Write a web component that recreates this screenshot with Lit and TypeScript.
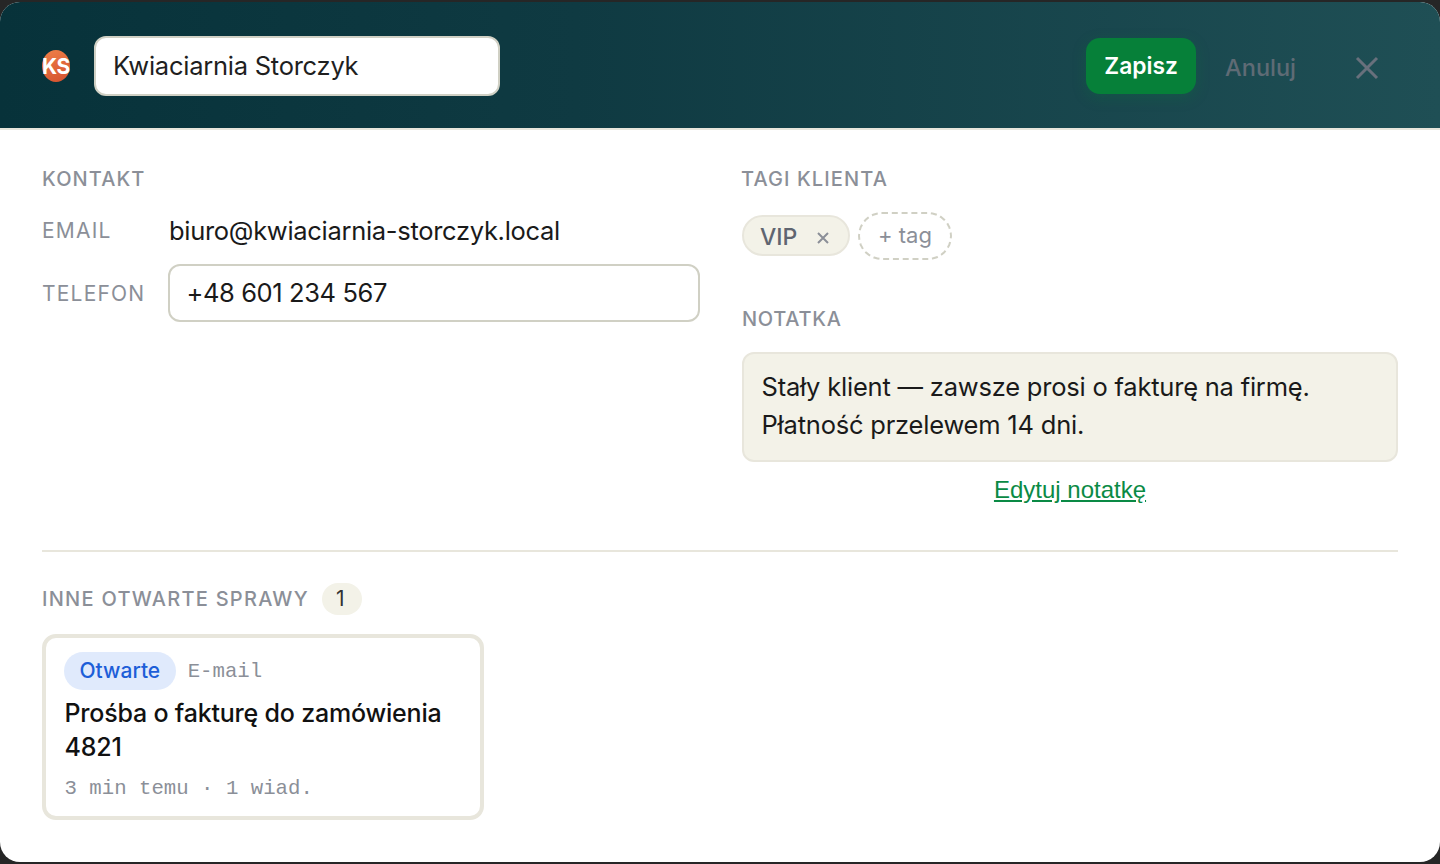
import { LitElement, html, css } from "lit";
import { customElement } from "lit/decorators.js";

@customElement("app-root")
export class AppRoot extends LitElement {
  static styles = css`
    :host { display: block; width: 1440px; height: 864px; background: #262626; font-family: Inter, "Liberation Sans", sans-serif; color: #1a1a1a; overflow: hidden; }
    .modal { height: 860px; margin-top: 2px; background: #fff; border-radius: 20px; overflow: hidden; display: flex; flex-direction: column; }
    .head { height: 128px; flex: none; box-sizing: border-box; border-bottom: 2px solid #e8e6dc; background: linear-gradient(90deg, #07323a 0%, #0f3a42 40%, #1f4f55 100%); display: flex; align-items: center; padding: 2px 42px 0; }
    .avatar { width: 28px; height: 32px; border-radius: 50%; background: linear-gradient(160deg, #ef8048, #d4502e); color: #fff; font-weight: 700; font-size: 21px; letter-spacing: -0.4px; display: flex; align-items: center; justify-content: center; flex: none; margin-right: 24px; white-space: nowrap; }
    .name { box-sizing: border-box; width: 406px; height: 60px; border: 2px solid #d0d0c4; border-radius: 12px; background: #fff; padding: 0 17px 2px; display: flex; align-items: center; font-size: 25.5px; letter-spacing: -0.25px; color: #1f1f1f; }
    .spacer { flex: 1; }
    .save { box-sizing: border-box; width: 110px; height: 56px; padding-bottom: 2px; border-radius: 14px; background: #068039; color: #fff; font-weight: 600; font-size: 22.8px; display: flex; align-items: center; justify-content: center; box-shadow: 0 4px 14px rgba(6,128,57,.25); }
    .cancel { color: #5f6b75; font-size: 23.5px; margin-left: 29px; padding-top: 2px; font-weight: 500; }
    .x { margin: 4px 19px 0 59px; display: block; }
    .body { flex: 1; padding: 35px 42px 0; display: flex; flex-direction: column; }
    .cols { display: grid; grid-template-columns: 658px 656px; column-gap: 42px; height: 385px; border-bottom: 2px solid #e8e6dc; }
    .label { font-size: 20px; font-weight: 500; letter-spacing: 1.1px; color: #8b8f98; line-height: 28px; }
    .tagi { margin-left: -1px; }
    .row { display: flex; align-items: center; }
    .row .k { width: 127px; flex: none; font-size: 21px; letter-spacing: 1.2px; color: #8b8f98; }
    .email { margin-top: 14px; height: 46px; font-size: 25.5px; letter-spacing: -0.3px; }
    .tel { margin-top: 11px; }
    .input { box-sizing: border-box; width: 532px; height: 58px; border: 2px solid #d0d0c4; border-radius: 12px; margin-left: -1px; padding: 0 17px 2px 16.5px; display: flex; align-items: center; font-size: 25.5px; letter-spacing: -0.4px; }
    .tags { display: flex; align-items: center; gap: 8px; margin-top: 19px; }
    .tag { box-sizing: border-box; width: 108px; height: 41px; margin-top: -1px; border: 2px solid #e8e6dc; background: #f3f2e8; border-radius: 21px; display: flex; align-items: center; padding: 2px 16px 0; font-size: 23px; font-weight: 500; color: #5f6570; gap: 20px; }
    .tag svg { margin-top: 2px; }
    .add { box-sizing: border-box; width: 94px; height: 48px; padding-bottom: 2px; border: 2px dashed #d0d0c4; border-radius: 24px; display: flex; align-items: center; justify-content: center; font-size: 22px; color: #8b8f98; }
    .note-label { margin-top: 45px; letter-spacing: 0.7px; }
    .note { box-sizing: border-box; margin-top: 19px; height: 110px; background: #f3f2e8; border: 2px solid #e8e6dc; border-radius: 12px; padding: 0 18px 2px 17.5px; display: flex; flex-direction: column; justify-content: center; font-size: 25.5px; line-height: 38px; letter-spacing: -0.21px; }
    .edit { display: block; text-align: center; margin-top: 14px; font-family: "Liberation Sans", sans-serif; font-size: 24px; color: #0a8a45; text-decoration: underline; }
    .others { display: flex; align-items: center; gap: 13px; margin-top: 31px; }
    .others .label { letter-spacing: 1.26px; }
    .count { box-sizing: border-box; width: 40px; height: 32px; padding: 0 3px 2px 0; border-radius: 16px; background: #f3f2e8; display: flex; align-items: center; justify-content: center; font-size: 21px; color: #333; }
    .card { box-sizing: border-box; width: 442px; height: 186px; margin-top: 19px; border: 4px solid #e8e6dc; border-radius: 14px; padding: 14px 18px; }
    .meta { display: flex; align-items: center; gap: 12px; }
    .pill { box-sizing: border-box; height: 38px; padding: 0 15.5px 2px; border-radius: 19px; background: #e0eafc; color: #1d5ed8; font-size: 21px; font-weight: 500; display: flex; align-items: center; }
    .mono { font-family: "Liberation Mono", monospace; font-size: 20.7px; color: #8b8f98; }
    .title { font-size: 25px; font-weight: 500; line-height: 34px; color: #111; margin: 6px 0 0 0.5px; letter-spacing: -0.2px; }
    .foot { margin: 13px 0 0 0.5px; }
  `;

  render() {
    return html`<div class="modal">
      <div class="head">
        <div class="avatar">KS</div>
        <div class="name">Kwiaciarnia Storczyk</div>
        <div class="spacer"></div>
        <div class="save">Zapisz</div>
        <div class="cancel">Anuluj</div>
        <svg class="x" width="24" height="24" viewBox="0 0 24 24" fill="none" stroke="#68707c" stroke-width="3"><path d="M2 2 22 22M22 2 2 22"/></svg>
      </div>
      <div class="body">
        <div class="cols">
          <div>
            <div class="label">KONTAKT</div>
            <div class="row email"><span class="k">EMAIL</span><span>biuro@kwiaciarnia-storczyk.local</span></div>
            <div class="row tel"><span class="k">TELEFON</span><div class="input">+48 601 234 567</div></div>
          </div>
          <div>
            <div class="label tagi">TAGI KLIENTA</div>
            <div class="tags">
              <div class="tag">VIP <svg width="12" height="12" viewBox="0 0 12 12" stroke="#8b8f98" stroke-width="2"><path d="M1 1 11 11M11 1 1 11"/></svg></div>
              <div class="add">+ tag</div>
            </div>
            <div class="label note-label">NOTATKA</div>
            <div class="note"><div>Stały klient — zawsze prosi o fakturę na firmę.</div><div>Płatność przelewem 14 dni.</div></div>
            <a class="edit">Edytuj notatkę</a>
          </div>
        </div>
        <div class="others"><div class="label">INNE OTWARTE SPRAWY</div><div class="count">1</div></div>
        <div class="card">
          <div class="meta"><div class="pill">Otwarte</div><div class="mono">E-mail</div></div>
          <div class="title">Prośba o fakturę do zamówienia 4821</div>
          <div class="mono foot">3 min temu · 1 wiad.</div>
        </div>
      </div>
    </div>`;
  }
}
